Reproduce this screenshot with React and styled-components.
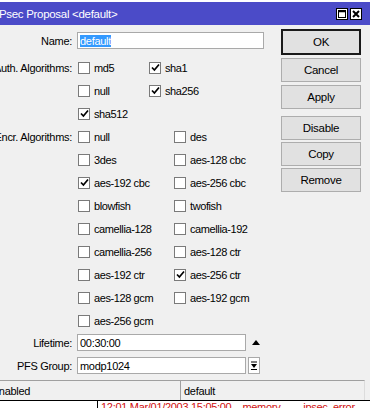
import React from 'react'
import styled, { createGlobalStyle } from 'styled-components'

const GlobalStyle = createGlobalStyle`
  html, body {
    margin: 0;
    padding: 0;
    overflow: hidden;
    background: #ffffff;
  }
  body {
    font-family: "Liberation Sans", Arial, sans-serif;
    font-size: 11px;
    letter-spacing: -0.3px;
    color: #000;
  }
`

const Screen = styled.div`
  width: 370px;
  height: 408px;
  overflow: hidden;
  background: #ffffff;
`

const Window = styled.div`
  width: 380px;
  margin: 2px 0 0 -10px;
  background: #f0f0f0;
`

const TitleBar = styled.div`
  height: 23px;
  background: #4b4bc8;
  color: #fff;
  display: flex;
  align-items: center;
  padding: 0 8px 0 6px;
  gap: 2px;
`

const TitleText = styled.div`
  flex: 1;
  font-size: 11.5px;
`

const TitleButton = styled.div`
  width: 12px;
  height: 12px;
  box-sizing: border-box;
  background: #fff;
  border: 1px solid #000;
  display: flex;
  align-items: center;
  justify-content: center;
`

const Body = styled.div`
  display: flex;
`

const Form = styled.div`
  flex: 1;
  padding: 7px 0 6px;
`

const Row = styled.div`
  display: flex;
  align-items: center;
  height: ${p => p.h || 23}px;
  margin-top: ${p => p.mt || 0}px;
`

const Label = styled.div`
  width: 82px;
  padding-right: 5px;
  text-align: right;
  white-space: nowrap;
  flex-shrink: 0;
`

const Input = styled.div`
  width: ${p => p.w}px;
  height: 17px;
  box-sizing: border-box;
  background: #fff;
  border: 1px solid #a9a9a9;
  padding: 0 2px;
  display: flex;
  align-items: center;
  white-space: nowrap;
`

const Selected = styled.span`
  background: #3399ff;
  color: #fff;
`

const CheckCell = styled.div`
  width: ${p => p.w}px;
  display: flex;
  align-items: center;
  gap: 4px;
  padding-left: 1px;
  white-space: nowrap;
  letter-spacing: -0.4px;
`

const Box = styled.div`
  width: 12px;
  height: 12px;
  box-sizing: border-box;
  background: #fff;
  border: 1px solid #7a7a7a;
  display: flex;
  align-items: center;
  justify-content: center;
`

const Triangle = styled.div`
  margin-left: 6px;
  width: 0;
  height: 0;
  border-left: 4px solid transparent;
  border-right: 4px solid transparent;
  border-bottom: 5px solid #000;
`

const DropButton = styled.div`
  margin-left: 2px;
  width: 12px;
  height: 17px;
  box-sizing: border-box;
  background: #fff;
  border: 1px solid #a9a9a9;
  display: flex;
  align-items: center;
  justify-content: center;
`

const ButtonColumn = styled.div`
  width: 80px;
  margin-right: 9px;
  padding-top: 4px;
  display: flex;
  flex-direction: column;
`

const Button = styled.div`
  height: ${p => p.h || 24}px;
  margin-top: ${p => p.mt || 0}px;
  box-sizing: border-box;
  background: #e1e1e1;
  border: ${p => (p.primary ? '2px solid #1a1a1a' : '1px solid #adadad')};
  display: flex;
  align-items: center;
  justify-content: center;
  font-size: 11.5px;
`

const StatusBar = styled.div`
  display: flex;
  height: 19px;
  margin-right: 5px;
  border-top: 1px solid #a0a0a0;
  border-right: 1px solid #dcdcdc;
`

const StatusCell = styled.div`
  width: ${p => (p.w ? `${p.w}px` : 'auto')};
  flex: ${p => (p.w ? 'none' : 1)};
  padding-left: ${p => p.pl}px;
  border-right: ${p => (p.w ? '1px solid #a0a0a0' : 'none')};
  display: flex;
  align-items: center;
`

const LogStrip = styled.div`
  border-top: 1px solid #000;
  background: #fff;
  height: 12px;
  display: flex;
  color: #d01010;
`

const LogCell = styled.div`
  margin-left: ${p => p.ml}px;
  padding-left: 3px;
  border-left: ${p => (p.line ? '1px solid #000' : 'none')};
  white-space: nowrap;
`

const Check = () => (
  <svg width="9" height="9" viewBox="0 0 9 9">
    <path d="M1 4.5 L3.4 7 L8 1.5" fill="none" stroke="#000" strokeWidth="1.7" />
  </svg>
)

const CheckItem = ({ w, checked, children }) => (
  <CheckCell w={w}>
    <Box>{checked ? <Check /> : null}</Box>
    {children}
  </CheckCell>
)

const auth = [
  [{ t: 'md5' }, { t: 'sha1', c: true }],
  [{ t: 'null' }, { t: 'sha256', c: true }],
  [{ t: 'sha512', c: true }],
]

const encr = [
  [{ t: 'null' }, { t: 'des' }],
  [{ t: '3des' }, { t: 'aes-128 cbc' }],
  [{ t: 'aes-192 cbc', c: true }, { t: 'aes-256 cbc' }],
  [{ t: 'blowfish' }, { t: 'twofish' }],
  [{ t: 'camellia-128' }, { t: 'camellia-192' }],
  [{ t: 'camellia-256' }, { t: 'aes-128 ctr' }],
  [{ t: 'aes-192 ctr' }, { t: 'aes-256 ctr', c: true }],
  [{ t: 'aes-128 gcm' }, { t: 'aes-192 gcm' }],
  [{ t: 'aes-256 gcm' }],
]

const CheckGroup = ({ title, rows, colW, mt }) =>
  rows.map((r, i) => (
    <Row key={title + i} mt={i === 0 ? mt : 0}>
      <Label>{i === 0 ? title : ''}</Label>
      {r.map(it => (
        <CheckItem key={it.t} w={colW} checked={it.c}>
          {it.t}
        </CheckItem>
      ))}
    </Row>
  ))

export default function App() {
  return (
    <Screen>
      <GlobalStyle />
      <Window>
        <TitleBar>
          <TitleText>IPsec Proposal &lt;default&gt;</TitleText>
          <TitleButton>
            <svg width="8" height="8" viewBox="0 0 8 8">
              <rect x="0.5" y="0.5" width="7" height="7" fill="none" stroke="#000" />
              <line x1="0" y1="1.5" x2="8" y2="1.5" stroke="#000" strokeWidth="1.5" />
            </svg>
          </TitleButton>
          <TitleButton>
            <svg width="8" height="8" viewBox="0 0 8 8">
              <path d="M1 1 L7 7 M7 1 L1 7" stroke="#000" strokeWidth="2" />
            </svg>
          </TitleButton>
        </TitleBar>
        <Body>
          <Form>
            <Row h={17}>
              <Label>Name:</Label>
              <Input w={187}>
                <Selected>default</Selected>
              </Input>
            </Row>
            <CheckGroup title="Auth. Algorithms:" rows={auth} colW={70} mt={7} />
            <CheckGroup title="Encr. Algorithms:" rows={encr} colW={95} />
            <Row h={17} mt={2}>
              <Label>Lifetime:</Label>
              <Input w={169}>00:30:00</Input>
              <Triangle />
            </Row>
            <Row h={17} mt={6}>
              <Label>PFS Group:</Label>
              <Input w={169}>modp1024</Input>
              <DropButton>
                <svg width="8" height="9" viewBox="0 0 8 9">
                  <line x1="1" y1="1" x2="7" y2="1" stroke="#000" strokeWidth="1" />
                  <path d="M1 3 L7 3 L4 7 Z" fill="#000" />
                  <line x1="1" y1="8.5" x2="7" y2="8.5" stroke="#000" strokeWidth="1" />
                </svg>
              </DropButton>
            </Row>
          </Form>
          <ButtonColumn>
            <Button primary h={26}>OK</Button>
            <Button mt={3}>Cancel</Button>
            <Button mt={3}>Apply</Button>
            <Button mt={7}>Disable</Button>
            <Button mt={2}>Copy</Button>
            <Button mt={2}>Remove</Button>
          </ButtonColumn>
        </Body>
        <StatusBar>
          <StatusCell w={187} pl={3}>enabled</StatusCell>
          <StatusCell pl={3}>default</StatusCell>
        </StatusBar>
      </Window>
      <LogStrip>
        <LogCell ml={97} line>12:01 Mar/01/2003 15:05:00</LogCell>
        <LogCell ml={8}>memory</LogCell>
        <LogCell ml={20}>ipsec, error</LogCell>
      </LogStrip>
    </Screen>
  )
}
